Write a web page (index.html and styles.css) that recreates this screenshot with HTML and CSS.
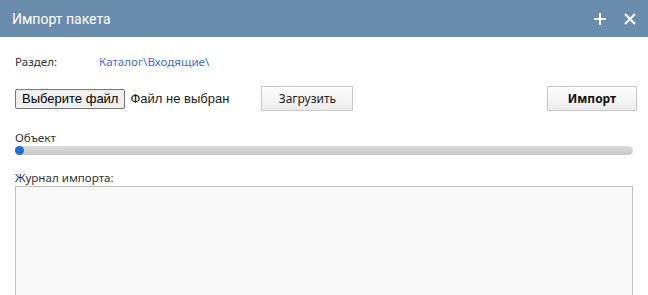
FILE: index.html
```html
<!DOCTYPE html>
<html lang="ru">
<head>
<meta charset="utf-8">
<title>Импорт пакета</title>
<link rel="stylesheet" href="styles.css">
</head>
<body>
<div class="win">
  <div class="win-head">
    <span class="win-title">Импорт пакета</span>
    <span class="win-tools">
      <svg class="tool" width="14" height="14" viewBox="0 0 14 14"><path d="M7 1v12M1 7h12" stroke="#fff" stroke-width="2"/></svg>
      <svg class="tool" width="12" height="12" viewBox="0 0 12 12"><path d="M1 1l10 10M11 1L1 11" stroke="#fff" stroke-width="2"/></svg>
    </span>
  </div>
  <div class="win-body">
    <div class="row-section">
      <span class="lbl">Раздел:</span>
      <a class="path" href="#">Каталог\Входящие\</a>
    </div>
    <div class="row-actions">
      <span class="file-btn">Выберите файл</span>
      <span class="file-name">Файл не выбран</span>
      <span class="btn btn-load">Загрузить</span>
      <span class="btn btn-import">Импорт</span>
    </div>
    <div class="cap">Объект</div>
    <div class="pbar"><p style="width: 0%;"></p></div>
    <div class="cap cap-log">Журнал импорта:</div>
    <div class="log"></div>
  </div>
</div>
</body>
</html>
```

FILE: styles.css
```css
*{margin:0;padding:0;box-sizing:border-box;}
body{font-family:"Noto Sans",Arial,sans-serif;font-size:11.6px;color:#333;background:#fff;}

.win-head{height:37px;background:#6a8cad;display:flex;align-items:center;padding:0 12px 0 12px;}
.win-title{font-family:Roboto,"Liberation Sans",sans-serif;font-size:14px;color:#fff;flex:1;}
.win-tools{display:flex;align-items:center;gap:17px;}
.tool{display:block;}

.win-body{padding:0 15px;}
.row-section{height:48px;display:flex;align-items:center;padding-top:1px;}
.lbl{width:84px;}
.path{color:#3d6fd6;text-decoration:none;}

.row-actions{display:flex;align-items:center;height:27px;margin-top:0;}
.file-btn{font-family:"Liberation Sans",Arial,sans-serif;font-size:13px;color:#000;background:#efefef;border:1px solid #767676;border-radius:2px;height:20px;line-height:18px;padding:0 6px;}
.file-name{font-family:"Liberation Sans",Arial,sans-serif;font-size:13px;color:#222;margin-left:5px;}
.btn{height:25px;line-height:23px;text-align:center;border:1px solid #c8c8c8;background:linear-gradient(#fdfdfd,#ececec);color:#222;font-size:12px;}
.btn-load{width:92px;margin-left:32px;}
.btn-import{width:90px;margin-left:auto;margin-right:-4px;font-weight:700;color:#111;}

.cap{margin-top:18px;line-height:16px;}
.pbar{height:9px;border-radius:5px;background:linear-gradient(#dcdcdc,#c8c8c8);position:relative;}
.pbar p{height:9px;}
.pbar p::after{content:"";position:absolute;left:0;top:0;width:9px;height:9px;border-radius:50%;background:#1b6fd6;}
.cap-log{margin-top:15px;line-height:16px;}
.log{height:120px;background:#f9f9f9;border:1px solid #c0c0c0;}
```
